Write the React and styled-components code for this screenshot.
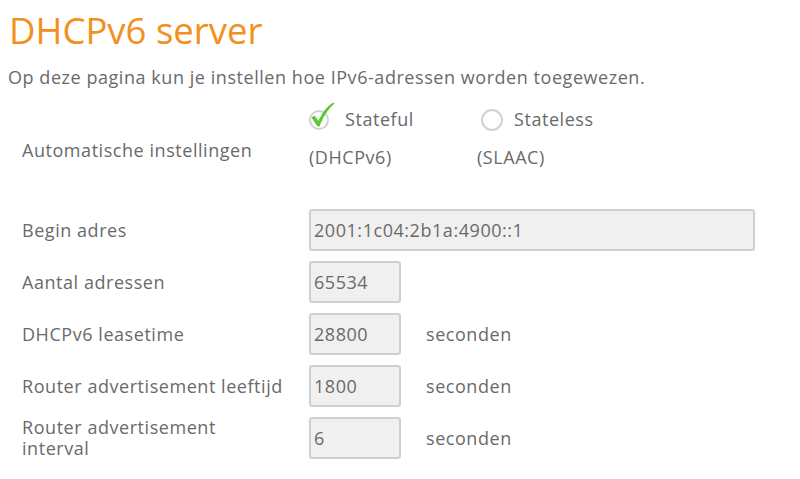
import React from "react";
import styled, { createGlobalStyle } from "styled-components";

const Global = createGlobalStyle`
  html, body { margin: 0; padding: 0; background: #fff; }
  body { font-family: "Open Sans", "Noto Sans", sans-serif; color: #6a6a6a; }
`;

const Page = styled.div`
  width: 800px;
  height: 479px;
  overflow: hidden;
  padding: 8px 8px 0 8px;
  box-sizing: border-box;
`;

const Title = styled.h1`
  margin: 0 0 0 1px;
  font-weight: 400;
  font-size: 36.5px;
  line-height: 44px;
  color: #f39020;
  letter-spacing: 0;
`;

const Intro = styled.p`
  margin: 13px 0 0 0;
  font-size: 18px;
  line-height: 24px;
  letter-spacing: 0.55px;
  color: #6a6a6a;
`;

const Form = styled.div`
  display: grid;
  grid-template-columns: 287px auto;
  padding-left: 14px;
  margin-top: 14px;
  row-gap: 10px;
  font-size: 18px;
  letter-spacing: 0.55px;
`;

const Label = styled.div`
  line-height: 21px;
  color: #6a6a6a;
  display: flex;
  align-items: center;
  min-height: 42px;
`;

const AutoLabel = styled(Label)`
  padding-bottom: 2px;
`;

const Options = styled.div`
  display: flex;
  margin-bottom: 30px;
`;

const Option = styled.div`
  display: flex;
  flex-direction: column;
  width: ${(p) => p.$w}px;
`;

const OptionHead = styled.div`
  display: flex;
  align-items: center;
  height: 32px;
  color: #6a6a6a;
`;

const Sub = styled.div`
  line-height: 24px;
  margin-top: 10px;
  color: #6a6a6a;
`;

const Radio = styled.span`
  display: inline-block;
  width: 18px;
  height: 18px;
  border: 2px solid #d2d2d2;
  border-radius: 50%;
  margin: 2px 11px 0 4px;
`;

const CheckWrap = styled.span`
  display: inline-flex;
  margin-right: 10px;
  margin-top: -6px;
`;

const FieldRow = styled.div`
  display: flex;
  align-items: center;
`;

const Input = styled.div`
  box-sizing: border-box;
  width: ${(p) => p.$w}px;
  height: 42px;
  background: #f0f0f0;
  border: 2px solid #d0d0d0;
  border-radius: 3px;
  display: flex;
  align-items: center;
  padding-left: 3px;
  color: #6a6a6a;
`;

const Unit = styled.span`
  margin-left: 25px;
  color: #6a6a6a;
`;

const CheckIcon = () => (
  <svg width="26" height="30" viewBox="0 0 26 30">
    <circle cx="10" cy="19" r="9" fill="none" stroke="#d2d2d2" strokeWidth="2" />
    <path
      d="M2.5 16.5 L5.5 14.5 L9.5 20 C13 12 18 5 24.5 1.5 L25.5 2.5 C19 8 14 16 10.5 25.5 L8.5 25.5 Z"
      fill="#5cc82e"
    />
  </svg>
);

const rows = [
  { label: "Begin adres", value: "2001:1c04:2b1a:4900::1", w: 446 },
  { label: "Aantal adressen", value: "65534", w: 92 },
  { label: "DHCPv6 leasetime", value: "28800", w: 92, unit: "seconden" },
  { label: "Router advertisement leeftijd", value: "1800", w: 92, unit: "seconden" },
  {
    label: (
      <>
        Router advertisement
        <br />
        interval
      </>
    ),
    value: "6",
    w: 92,
    unit: "seconden",
  },
];

export default function App() {
  return (
    <Page>
      <Global />
      <Title>DHCPv6 server</Title>
      <Intro>Op deze pagina kun je instellen hoe IPv6-adressen worden toegewezen.</Intro>
      <Form>
        <AutoLabel>Automatische instellingen</AutoLabel>
        <Options>
          <Option $w={168}>
            <OptionHead>
              <CheckWrap>
                <CheckIcon />
              </CheckWrap>
              Stateful
            </OptionHead>
            <Sub>(DHCPv6)</Sub>
          </Option>
          <Option $w={200}>
            <OptionHead>
              <Radio />
              Stateless
            </OptionHead>
            <Sub>(SLAAC)</Sub>
          </Option>
        </Options>
        {rows.map((r, i) => (
          <React.Fragment key={i}>
            <Label>{r.label}</Label>
            <FieldRow>
              <Input $w={r.w}>{r.value}</Input>
              {r.unit && <Unit>{r.unit}</Unit>}
            </FieldRow>
          </React.Fragment>
        ))}
      </Form>
    </Page>
  );
}
